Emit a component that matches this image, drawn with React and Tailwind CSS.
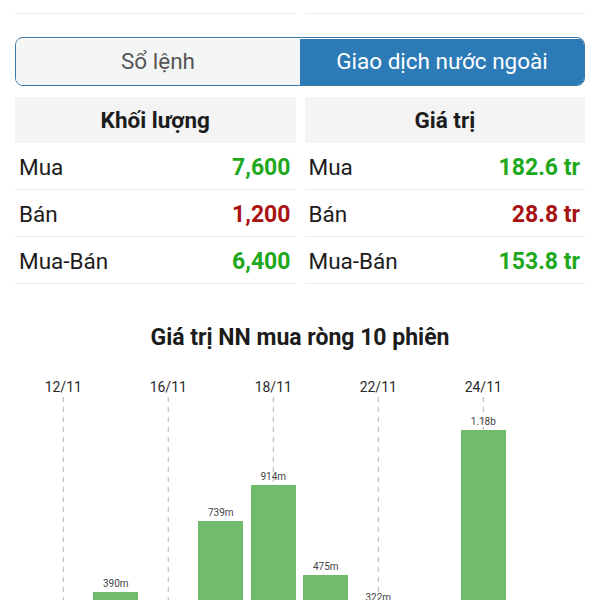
import React from "react";

const volume = [
    { label: "Mua", value: "7,600", tone: "up" },
    { label: "Bán", value: "1,200", tone: "down" },
    { label: "Mua-Bán", value: "6,400", tone: "up" },
];

const amount = [
    { label: "Mua", value: "182.6 tr", tone: "up" },
    { label: "Bán", value: "28.8 tr", tone: "down" },
    { label: "Mua-Bán", value: "153.8 tr", tone: "up" },
];

// net foreign buying per session, in millions
const sessions = [
    { date: "12/11", value: 140, text: "140m" },
    { date: "", value: 390, text: "390m" },
    { date: "16/11", value: 95, text: "95m" },
    { date: "", value: 739, text: "739m" },
    { date: "18/11", value: 914, text: "914m" },
    { date: "", value: 475, text: "475m" },
    { date: "22/11", value: 322, text: "322m" },
    { date: "", value: 210, text: "210m" },
    { date: "24/11", value: 1180, text: "1.18b" },
    { date: "", value: 160, text: "160m" },
];

const SCALE = 0.205;

function StatColumn({ title, rows }) {
    return (
        <div className="flex flex-col">
            <div className="h-[46px] pt-[2px] bg-[#f4f4f4] flex items-center justify-center text-[22.5px] font-bold text-[#1c1c1c]">
                {title}
            </div>
            {rows.map((row) => (
                <div
                    key={row.label}
                    className="h-[47px] pt-[4px] border-b border-[#ececec] flex items-center justify-between pl-[4px] pr-[5px]"
                >
                    <span className="text-[22.5px] text-[#1c1c1c]">{row.label}</span>
                    <span
                        className={
                            row.tone === "up"
                                ? "text-[23px] font-bold text-[#1ea81e]"
                                : "text-[23px] font-bold text-[#a81212]"
                        }
                    >
                        {row.value}
                    </span>
                </div>
            ))}
        </div>
    );
}

function Session({ item }) {
    return (
        <div className="w-[52.5px] flex flex-col items-center">
            <div className="h-[20px] leading-[20px] text-[14px] text-[#2a2a2a]">
                {item.date}
            </div>
            <div className="relative w-full h-[275px] flex flex-col items-center justify-end">
                {item.date && (
                    <svg
                        className="absolute left-0 top-0"
                        width="52"
                        height="275"
                    >
                        <line
                            x1="26.25"
                            y1="0"
                            x2="26.25"
                            y2="275"
                            stroke="#b3b3b3"
                            strokeWidth="1"
                            strokeDasharray="5 5"
                        />
                    </svg>
                )}
                <span className="relative text-[10px] leading-[12px] text-[#444] mb-[2px]">
                    {item.text}
                </span>
                <div
                    className="relative w-[45px] bg-[#70bc6c]"
                    style={{ height: Math.round(item.value * SCALE) }}
                />
            </div>
        </div>
    );
}

export default function App() {
    return (
        <div className="w-[600px] h-[600px] overflow-hidden bg-white font-['Roboto',sans-serif]">
            <div className="px-[15px]">
                {/* previous stats row, cut at the top */}
                <div className="-mt-[38px] grid grid-cols-2 gap-[9px]">
                    <div className="h-[52px] border-b border-[#ececec] flex items-center justify-between pl-[4px] pr-[5px] text-[22px] text-[#1c1c1c]">
                        <span>Tỷ lệ</span>
                        <span className="font-bold">0.00</span>
                    </div>
                    <div className="h-[52px] border-b border-[#ececec] flex items-center justify-between pl-[4px] pr-[5px] text-[22px] text-[#1c1c1c]">
                        <span>KLTB</span>
                        <span className="font-bold">12,300</span>
                    </div>
                </div>

                <div className="mt-[23px] h-[49px] pt-[1px] flex rounded-[8px] border-[1.5px] border-[#3b78a8] overflow-hidden">
                    <div className="flex-1 bg-[#f4f5f5] flex items-center justify-center text-[22.5px] text-[#555]">
                        Sổ lệnh
                    </div>
                    <div className="flex-1 bg-[#2c7bb7] flex items-center justify-center text-[22.5px] text-white">
                        Giao dịch nước ngoài
                    </div>
                </div>

                <div className="mt-[11px] grid grid-cols-2 gap-[9px]">
                    <StatColumn title="Khối lượng" rows={volume} />
                    <StatColumn title="Giá trị" rows={amount} />
                </div>

                <div className="mt-[40px] h-[28px] leading-[28px] text-center text-[23px] font-bold text-[#1c1c1c]">
                    Giá trị NN mua ròng 10 phiên
                </div>

                <div className="mt-[25px] ml-[22px] flex">
                    {sessions.map((item, i) => (
                        <Session key={i} item={item} />
                    ))}
                </div>
            </div>
        </div>
    );
}
